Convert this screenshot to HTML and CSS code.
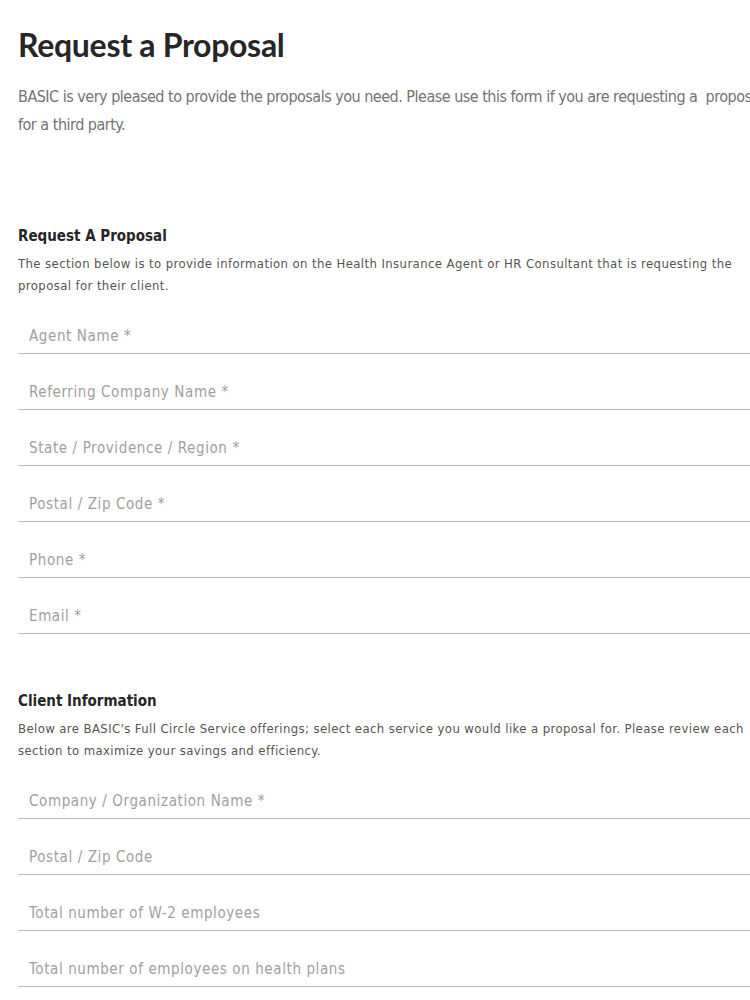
FILE: index.html
```html
<!DOCTYPE html>
<html lang="en">
<head>
<meta charset="utf-8">
<title>Request a Proposal</title>
<link rel="stylesheet" href="styles.css">
</head>
<body>
<main class="page">
  <h1 class="title">Request a Proposal</h1>
  <p class="intro">BASIC is very pleased to provide the proposals you need. Please use this form if you are requesting a&nbsp; proposal for a third party.</p>

  <form class="form">
    <section class="section section-first">
      <h2 class="section-title">Request A Proposal</h2>
      <p class="section-desc">The section below is to provide information on the Health Insurance Agent or HR Consultant that is requesting the proposal for their client.</p>
      <div class="field"><input class="input" type="text" placeholder="Agent Name *"></div>
      <div class="field"><input class="input" type="text" placeholder="Referring Company Name *"></div>
      <div class="field"><input class="input" type="text" placeholder="State / Providence / Region *"></div>
      <div class="field"><input class="input" type="text" placeholder="Postal / Zip Code *"></div>
      <div class="field"><input class="input" type="text" placeholder="Phone *"></div>
      <div class="field"><input class="input" type="text" placeholder="Email *"></div>
    </section>

    <section class="section section-second">
      <h2 class="section-title">Client Information</h2>
      <p class="section-desc">Below are BASIC's Full Circle Service offerings; select each service you would like a proposal for. Please review each section to maximize your savings and efficiency.</p>
      <div class="field"><input class="input" type="text" placeholder="Company / Organization Name *"></div>
      <div class="field"><input class="input" type="text" placeholder="Postal / Zip Code"></div>
      <div class="field"><input class="input" type="text" placeholder="Total number of W-2 employees"></div>
      <div class="field"><input class="input" type="text" placeholder="Total number of employees on health plans"></div>
    </section>
  </form>
</main>
</body>
</html>
```

FILE: styles.css
```css
html, body {
  margin: 0;
  padding: 0;
  background: #ffffff;
  overflow: hidden;
}

.page {
  width: 790px;
  padding: 25px 0 0 18px;
  box-sizing: content-box;
}

.title {
  margin: 0;
  font-family: "Lato", "Open Sans", sans-serif;
  font-weight: 700;
  font-size: 32px;
  line-height: 40px;
  color: #262626;
  letter-spacing: -0.3px;
}

.intro {
  margin: 18px 0 0;
  width: 760px;
  font-family: "DejaVu Sans Condensed", "DejaVu Sans", sans-serif;
  font-size: 16px;
  line-height: 28px;
  letter-spacing: -0.5px;
  color: #737373;
}

.form {
  margin: 0;
}

.section-first {
  margin-top: 87px;
}

.section-second {
  margin-top: 57px;
}

.section-title {
  margin: 0;
  font-family: "DejaVu Sans Condensed", "DejaVu Sans", sans-serif;
  font-weight: 700;
  font-size: 15px;
  line-height: 20px;
  color: #262626;
}

.section-desc {
  margin: 7px 0 0;
  width: 745px;
  font-family: "DejaVu Sans Condensed", "DejaVu Sans", sans-serif;
  font-size: 13px;
  line-height: 22px;
  letter-spacing: 0.4px;
  color: #555555;
}

.field {
  margin-top: 21px;
}

.section-desc + .field {
  margin-top: 22px;
}

.input {
  display: block;
  box-sizing: border-box;
  width: 100%;
  height: 35px;
  margin: 0;
  padding: 0 11px;
  border: 0;
  border-bottom: 1px solid #b9b9b9;
  background: transparent;
  outline: none;
  font-family: "DejaVu Sans Condensed", "DejaVu Sans", sans-serif;
  font-size: 15px;
  letter-spacing: 0.6px;
  color: #333;
}

.input::placeholder {
  color: #a0a0a0;
  opacity: 1;
}
```
